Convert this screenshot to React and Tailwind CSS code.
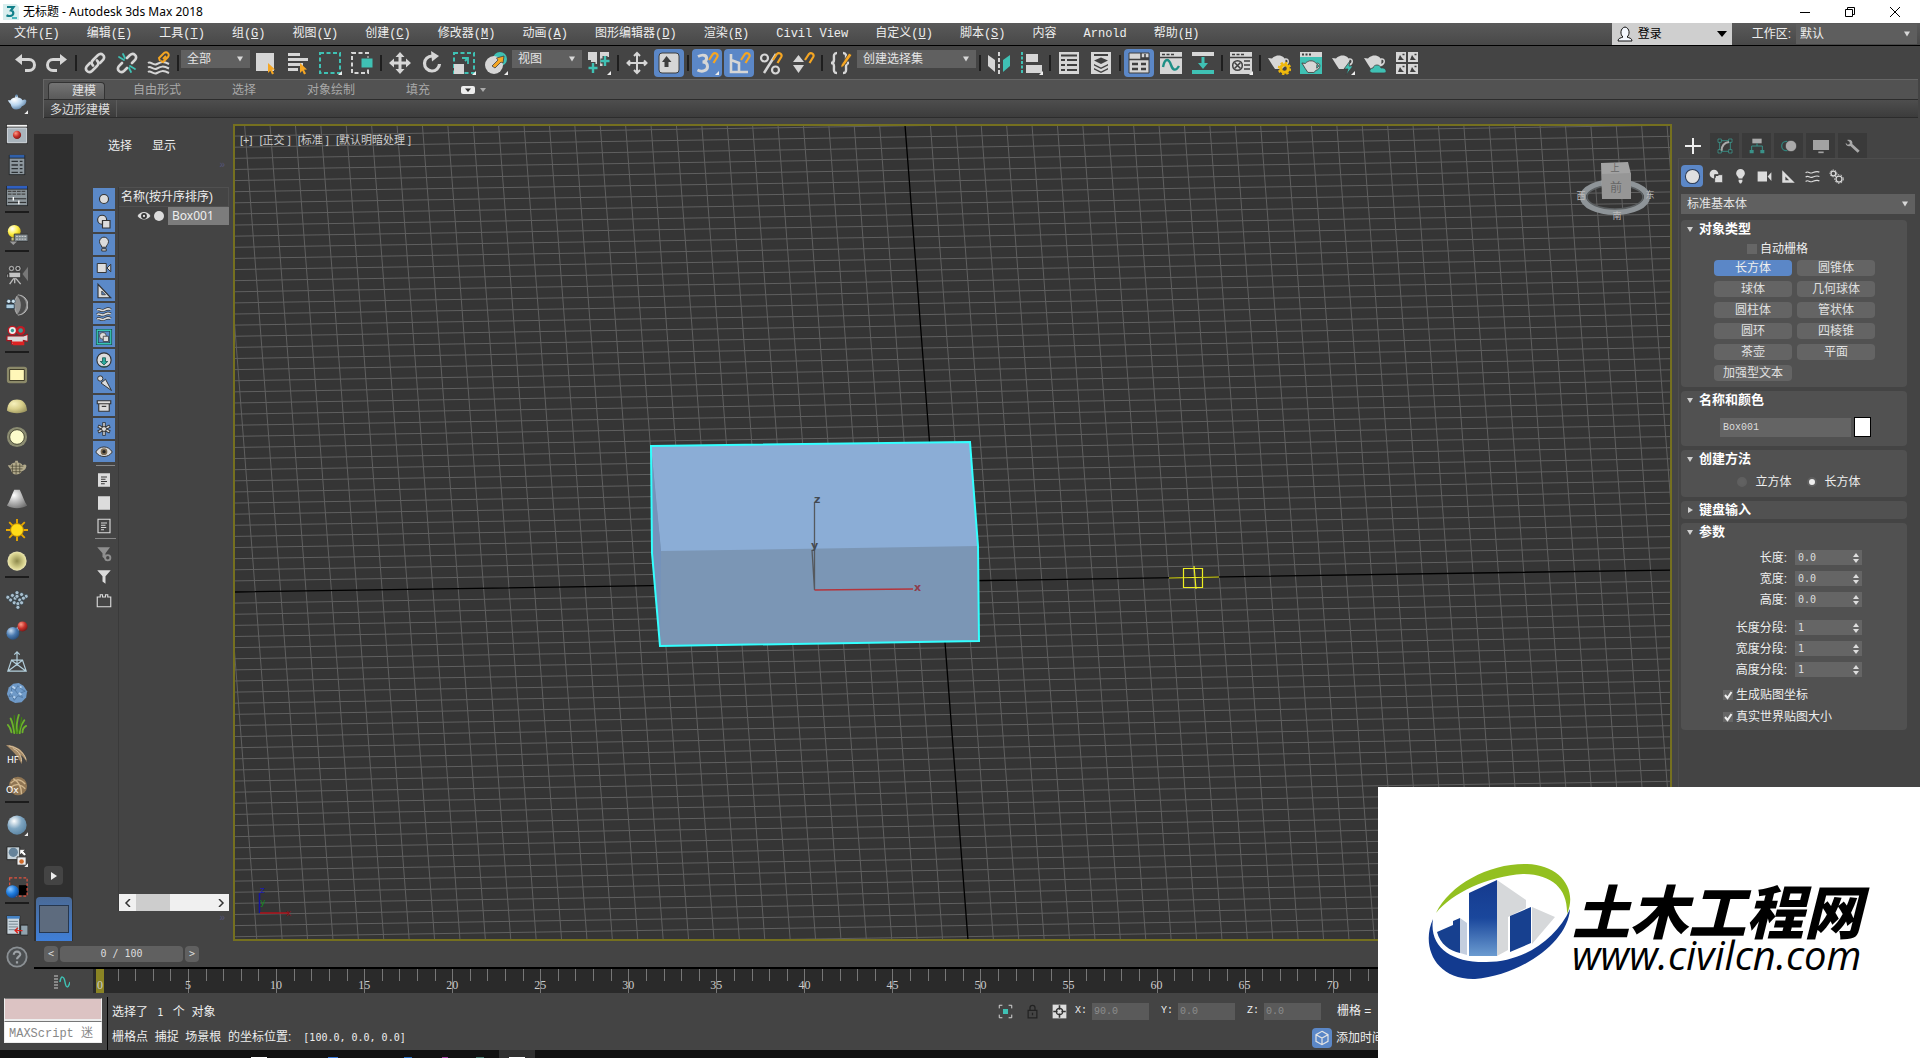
import React from "react";

const W = "#d6d6d6";
const T = "#3fc1b4";
const O = "#f5a623";
const D = "#3f3f3f";

/* ---------- small building blocks ---------- */

function Svg({ children, size = "size-6", box = "0 0 24 24" }) {
  return (
    <svg viewBox={box} className={`${size} shrink-0`} fill="none" aria-hidden="true">
      {children}
    </svg>
  );
}

function Caret({ color = "#d8d8d8" }) {
  return (
    <svg viewBox="0 0 8 6" className="pointer-events-none h-[6px] w-2 shrink-0 self-center justify-self-end [grid-area:1/1] mr-[6px]" aria-hidden="true">
      <path d="M1 .5h6L4 5.5z" fill={color} />
    </svg>
  );
}

function Dropdown({ label, value, className, color }) {
  return (
    <span className={`grid shrink-0 ${className}`}>
      <select aria-label={label} className="h-full w-full appearance-none bg-transparent pl-[6px] pr-4 text-xs outline-none [grid-area:1/1]">
        <option>{value}</option>
      </select>
      <Caret color={color} />
    </span>
  );
}

function Dots({ className }) {
  return <div className={`h-1 bg-[radial-gradient(#a0a0a0_40%,transparent_45%)] bg-size-[2px_2px] ${className}`} />;
}

/* ---------- main toolbar icons ---------- */

const cursor = <path d="M14 12l7 6.5-3 .3 2 3.6-2 1-1.7-3.6L14 22z" fill={O} />;
const corner = <path d="M24 20v4h-4z" fill="#eee" />;
const magnet = <path d="M14 9l4-6a2.6 2.6 0 0 1 4.2 3L18.500 12" stroke={O} strokeWidth="2.200" />;
const pot = (
  <path d="M1 7l4 .5C6.500 5.500 9 5 10 4.500h3c1.500.500 3.500 1 4.500 3 2-1 4.500.2 4.500 2.800 0 3-2.500 4.700-4.500 5.200L15 18H8l-3-4.500L1 7zm17.300 6c1.200-.6 2.200-1.500 2.200-2.800 0-1-.9-1.600-2-1.400z" fill={W} />
);

const mainIcons = {
  undo: <path d="M9 3L2 8.500 9 14v-4h7a3.500 3.500 0 0 1 0 8h-4v3h4a6.500 6.500 0 0 0 0-14H9z" fill={W} />,
  redo: <path d="M15 3l7 5.500-7 5.500v-4H8a3.500 3.500 0 0 0 0 8h4v3H8A6.500 6.500 0 0 1 8 7h7z" fill={W} />,
  link: <g stroke={W} strokeWidth="2.600" strokeLinecap="round"><path d="M10 14.500c-2-2-1.500-4 0-5.500l5-5c3.500-3 8 1 5 5l-3 3" /><path d="M14 9.500c2 2 1.500 4 0 5.500l-5 5c-3.500 3-8-1-5-5l3-3" /></g>,
  unlink: <g strokeWidth="2.600" strokeLinecap="round"><path d="M12 7l3-3c3.500-3 8 1 5 5l-3 3M12 17l-3 3c-3.500 3-8-1-5-5l3-3" stroke={W} /><path d="M4 6l5 3M8 3l2 4M20 18l-5-3M16 21l-2-4" stroke={T} strokeWidth="1.800" /></g>,
  bind: <g><path d="M1 12c3-2 5 3 9 1s6-3 12 0M1 16.500c3-2 5 3 9 1s6-3 12 0M1 21c3-2 5 3 9 1s6-3 12 0" stroke={W} strokeWidth="2" /><path d="M13 10l-1-3 5-5c3-2 6 1 4 4l-5 5-2-1M16 8l3-3" stroke={O} strokeWidth="2" /></g>,
  select: <g><path d="M2 2h18v18H2z" fill={W} />{cursor}</g>,
  byName: <g><path d="M2 2h12v3H2zM2 7h20v3H2zM2 12h15v3H2zM2 17h10v3H2z" fill={W} />{cursor}</g>,
  rect: <g><path d="M2 2h20v20H2z" stroke={T} strokeWidth="2" strokeDasharray="4 2.500" />{corner}</g>,
  window: <g><path d="M2 2h16v20H2z" stroke={W} strokeWidth="2" strokeDasharray="4 2.500" /><path d="M11 7h12v10H11z" fill={T} stroke="#444" /></g>,
  move: <path d="M12 1l4.500 5H13.500v4.500h4.500v-3L23 12l-5 4.500v-3h-4.500V18h3L12 23l-4.500-5h3v-4.500H6v3L1 12l5-4.500v3h4.500V6h-3z" fill={W} />,
  rotate: <g><path d="M19.500 13a7.500 7.500 0 1 1-7.500-8" stroke={W} strokeWidth="3.200" /><path d="M11 0l8 5-7 5.500z" fill={W} /></g>,
  scale: <g><path d="M2 2h20v20H2z" stroke={T} strokeWidth="2" strokeDasharray="4 2.500" /><path d="M2 13h10v10H2z" fill={W} /><path d="M10 7h6v6M16 7l-3 3" stroke={T} strokeWidth="1.800" />{corner}</g>,
  place: <g><circle cx="16" cy="8" r="7" fill={T} /><circle cx="10" cy="14" r="9" fill={W} /><path d="M8 15l6-6-1.500-2L20 5l-1 7-2-1-6 6z" fill={O} stroke={D} strokeWidth=".8" />{corner}</g>,
  pivot: <g><path d="M1 1h9v12H7v7H4V9H1zM13 1h9v5h-3v9h-6z" fill={W} /><path d="M6 11v10M1.500 16h9M18 5v10M13.500 10h9" stroke="#444" strokeWidth="5" /><path d="M6 12v10M1.500 17h9M18 5v10M13.500 10h9" stroke={T} strokeWidth="2.400" />{corner}</g>,
  manip: <path d="M12 3v18M3 12h18M9 5l3-3 3 3M9 19l3 3 3-3M5 9.500L2.500 12 5 14.500M19 9.500l2.500 2.500-2.500 2.500" stroke={W} strokeWidth="2" />,
  keyboard: <g><rect x="2" y="2" width="20" height="20" rx="3" fill={W} stroke={D} /><path d="M9.500 5l5 6h-3v5h-4v-5H5z" fill={D} /></g>,
  snap3: <g><path d="M3 5.500c6-3 9-.5 8.500 2.500-.3 2-2 3-4 3 3 0 5 1.500 5 4.500 0 4-5 6-10 3.500" stroke={W} strokeWidth="3" />{magnet}{corner}</g>,
  angle: <g><path d="M4 3v18h17M4 9l8 3v9" stroke={W} strokeWidth="2.600" />{magnet}</g>,
  percent: <g><circle cx="5.500" cy="7" r="3.500" stroke={W} strokeWidth="2.200" /><circle cx="16.500" cy="19" r="3.500" stroke={W} strokeWidth="2.200" /><path d="M17 3L5 22" stroke={W} strokeWidth="2.500" />{magnet}</g>,
  spinner: <g><path d="M2 11l5.500-7L13 11zM2 14h11l-5.500 8z" fill={W} />{magnet}</g>,
  named: <g><path d="M8 2C4 2 5 6 5 8.500S4 12 2 12c2 0 3 1 3 3.500S4 22 8 22M14 2c4 0 3 4 3 6.500s1 3.500 3 3.500c-2 0-3 1-3 3.500s1 6.500-3 6.500" stroke={W} strokeWidth="2.400" /><path d="M12 14l8-12 3 2-8 11-3 2z" fill={O} stroke={D} strokeWidth=".8" /></g>,
  mirror: <g><path d="M1 4l7 5v12l-7-6z" fill={W} /><path d="M23 4l-7 5v12l7-6z" fill={T} /><path d="M12 1v22" stroke={W} strokeWidth="2" strokeDasharray="4 2" /></g>,
  align: <g><path d="M3 1v22" stroke={T} strokeWidth="2" strokeDasharray="3 1.500" /><path d="M7 3h12v8H7zM7 14h16v8H7z" fill={W} />{corner}</g>,
  table: <g><path d="M2 1h20v22H2z" fill={W} /><path d="M4 4.500h16M4 9h4M10 9h10M4 14h4M10 14h10M4 19h4M10 19h10" stroke={D} strokeWidth="2.200" /></g>,
  layers: <g><path d="M2 1h20v22H2z" fill={W} /><path d="M5 4h14" stroke={D} strokeWidth="2" /><path d="M12 6.500l7 3-7 3.500-7-3.500zM5 13l7 3.500 7-3.500v1.500L12 18l-7-3.500zM5 17l7 3.500 7-3.500v1.500L12 22l-7-3.500z" fill={D} /></g>,
  ribbon: <g><path d="M2 2h20v20H2z" fill={W} stroke={D} /><path d="M14 2v5h8M18 3v4M2 8.500h20" stroke={D} strokeWidth="1.500" /><path d="M5 13h6M14 13h5M5 18h6M14 18h5" stroke={D} strokeWidth="2.400" /></g>,
  curve: <g><path d="M1 1h22v22H1z" fill={W} /><path d="M3 3.500h3M7.500 3.500h3M12 3.500h3M1 6.500h22" stroke={D} strokeWidth="1.600" /><path d="M4 16c2-10 6-8 8-2s5 6 8 1" stroke="#1f8f86" strokeWidth="2.400" /></g>,
  schematic: <g><path d="M1 1h22v4H1z" fill={W} /><path d="M1 19h22v4H1z" fill={T} /><path d="M10.500 6h3v6H17l-5 6-5-6h3.500z" fill={T} /></g>,
  material: <g><path d="M1 1h22v22H1z" fill={W} /><path d="M3 3.500h3M7.500 3.500h3M12 3.500h3M15 10h6M15 14h6M15 18h6M1 6.500h22" stroke={D} strokeWidth="1.600" /><circle cx="8.500" cy="14.500" r="4.800" stroke={D} strokeWidth="1.500" /><path d="M5.500 11.500l6 6M11.500 11.500l-6 6" stroke={D} strokeWidth="1.500" />{corner}</g>,
  setup: <g>{pot}<circle cx="17.500" cy="17.500" r="3.800" stroke="#f0b90b" strokeWidth="3" /><circle cx="17.500" cy="17.500" r="5.800" stroke="#f0b90b" strokeWidth="1.800" strokeDasharray="2.500 2" /></g>,
  frame: <g><path d="M1 1h22v22H1z" fill={T} /><path d="M1 1h22v5H1z" fill={W} /><path d="M3 3.500h2M6.500 3.500h2M10 3.500h2" stroke={D} strokeWidth="2" /><g transform="translate(2 6) scale(.86)" stroke={D}>{pot}</g></g>,
  render: <g>{pot}<path d="M19 10l-6 8h4l-2 6 7-9h-4z" fill={T} stroke={D} strokeWidth=".8" />{corner}</g>,
  cloud: <g>{pot}<path d="M9 22c-4-1-2-5 1-5 1-4 7-4 8 0 5-1 7 5 3 5z" fill={T} stroke={D} strokeWidth=".8" /></g>,
  gallery: <g><path d="M1 1h10v10H1zM13 1h10v10H13zM1 13h10v10H1zM13 13h10v10H13z" fill={W} /><path d="M3 9l2-5 2 3 2 2zM15 9l2-5 2 3 2 2zM3 21l2-5 2 3 2 2zM15 21l2-5 2 3 2 2z" fill={D} /><path d="M7.500 3.500h2M19.500 3.500h2M7.500 15.500h2M19.500 15.500h2" stroke={D} strokeWidth="1.500" /></g>,
};

function ToolButton({ name, active }) {
  return (
    <button aria-label={name} className="flex h-8 w-8 shrink-0 items-center justify-center">
      <span className={active ? "flex h-7 w-[30px] items-center justify-center rounded-sm bg-[#5b87c7]" : "flex h-7 w-[30px] items-center justify-center"}>
        <Svg size="size-6">{mainIcons[name]}</Svg>
      </span>
    </button>
  );
}

const Sep = () => <span className="mx-[2px] h-4 w-[2px] shrink-0 bg-[#1e1e1e]" />;

function Tools({ names, active = [] }) {
  return names.map((n) => <ToolButton key={n} name={n} active={active.includes(n)} />);
}

function MainToolbar() {
  const sel = "h-[18px] bg-[#606060] text-[#e4e4e4]";
  return (
    <div className="flex h-[33px] shrink-0 items-center overflow-hidden bg-[#444]">
      <span className="ml-[3px] mr-[2px] h-7 w-1 bg-[radial-gradient(#a0a0a0_40%,transparent_45%)] bg-size-[2px_2px]" />
      <Tools names={["undo", "redo"]} />
      <Sep />
      <Tools names={["link", "unlink", "bind"]} />
      <Sep />
      <Dropdown label="选择过滤器" value="全部" className={`mb-[7px] w-[69px] ${sel}`} />
      <Tools names={["select", "byName", "rect", "window"]} />
      <Sep />
      <Tools names={["move", "rotate", "scale", "place"]} />
      <Dropdown label="参考坐标系" value="视图" className={`mb-[7px] mr-px w-[70px] ${sel}`} />
      <Tools names={["pivot"]} />
      <Sep />
      <Tools names={["manip", "keyboard"]} active={["keyboard"]} />
      <Sep />
      <Tools names={["snap3", "angle", "percent", "spinner"]} active={["snap3", "angle"]} />
      <Sep />
      <Tools names={["named"]} />
      <Dropdown label="命名选择集" value="创建选择集" className={`mb-[7px] mr-px w-[119px] ${sel}`} />
      <Sep />
      <Tools names={["mirror", "align"]} />
      <Sep />
      <Tools names={["table", "layers"]} />
      <Sep />
      <Tools names={["ribbon", "curve", "schematic"]} active={["ribbon"]} />
      <Sep />
      <Tools names={["material"]} />
      <Sep />
      <Tools names={["setup", "frame", "render", "cloud", "gallery"]} />
    </div>
  );
}

/* ---------- title and menu ---------- */

function TitleBar() {
  return (
    <header className="flex h-[23px] shrink-0 items-center bg-white text-black">
      <Svg size="ml-[3px] size-4" box="0 0 16 16">
        <path d="M0 0h13l3 3v13H0z" fill="#d8eeee" />
        <path d="M4 3h6.500L8 6.500c3 .5 3.500 5-1 5.500-1.500.1-2.500-.2-3.500-.8" stroke="#12808a" strokeWidth="2.200" />
        <path d="M9 14h5" stroke="#1aa3a8" strokeWidth="1.500" />
      </Svg>
      <h1 className="ml-1 text-xs font-normal font-['Noto_Sans','Noto_Sans_CJK_SC',sans-serif]">无标题 - Autodesk 3ds Max 2018</h1>
      <div className="ml-auto flex">
        <button aria-label="最小化" className="flex w-[45px] justify-center"><Svg size="size-3" box="0 0 12 12"><path d="M1 6.500h10" stroke="#000" /></Svg></button>
        <button aria-label="还原" className="flex w-[45px] justify-center"><Svg size="size-3" box="0 0 12 12"><path d="M1.500 3.500h7v7h-7zM3.500 3.500v-2h7v7h-2" stroke="#000" /></Svg></button>
        <button aria-label="关闭" className="mr-[3px] flex w-[45px] justify-center"><Svg size="size-3" box="0 0 12 12"><path d="M1 1l10 10M11 1L1 11" stroke="#000" /></Svg></button>
      </div>
    </header>
  );
}

const menus = [
  ["文件", "F"], ["编辑", "E"], ["工具", "T"], ["组", "G"], ["视图", "V"], ["创建", "C"], ["修改器", "M"], ["动画", "A"],
  ["图形编辑器", "D"], ["渲染", "R"], ["Civil View"], ["自定义", "U"], ["脚本", "S"], ["内容"], ["Arnold"], ["帮助", "H"],
];

function MenuBar() {
  return (
    <nav className="flex h-[23px] shrink-0 items-center border-b border-black bg-linear-to-b from-[#5a5a5a] to-[#484848] text-[#eee]">
      <div className="flex gap-[27px] pl-[14px] font-['Liberation_Mono','Noto_Sans_CJK_SC',monospace] text-xs">
        {menus.map(([name, key]) => (
          <button key={name} className="whitespace-nowrap">
            {name}{key && <>(<u>{key}</u>)</>}
          </button>
        ))}
      </div>
      <div className="ml-auto flex h-[22px] w-[120px] items-center bg-[#cfcfcf] pl-[5px]">
        <Svg size="size-4" box="0 0 16 16">
          <path d="M1 15c0-3 3-3 5-4-3-2-3-9 2-10 5 1 5 8 2 10 2 1 5 1 5 4z" fill="#f4f8ff" stroke="#111" />
        </Svg>
        <span className="grid h-[22px] flex-1 text-black">
          <select aria-label="登录" className="appearance-none bg-transparent pl-[5px] text-xs outline-none [grid-area:1/1]"><option>登录</option></select>
          <svg viewBox="0 0 10 6" className="pointer-events-none mr-[5px] h-[6px] w-[10px] self-center justify-self-end [grid-area:1/1]" aria-hidden="true"><path d="M0 0h10L5 6z" fill="#000" /></svg>
        </span>
      </div>
      <label htmlFor="workspace" className="ml-5 mr-[5px] text-xs">工作区:</label>
      <span className="mr-[3px] grid h-5 w-[121px] bg-[#5e5e5e]">
        <select id="workspace" className="appearance-none bg-transparent pl-1 text-xs outline-none [grid-area:1/1]"><option>默认</option></select>
        <Caret />
      </span>
    </nav>
  );
}

function Ribbon() {
  return (
    <div className="ml-[9px] mr-[2px] shrink-0 border-l border-t border-[#666] text-xs">
      <div className="flex h-5 items-end gap-[51px] border-b border-[#2c2c2c] bg-[#525252] pl-1 text-[#a8a8a8]">
        <button className="-mr-[23px] h-[17px] rounded-t-sm border border-b-0 border-[#333] bg-linear-to-b from-[#747474] to-[#5a5a5a] pl-[23px] pr-2 leading-4 text-[#e0e0e0]">建模</button>
        <button className="leading-[17px]">自由形式</button>
        <button className="leading-[17px]">选择</button>
        <button className="leading-[17px]">对象绘制</button>
        <button className="leading-[17px]">填充</button>
        <button aria-label="功能区选项" className="-ml-5 flex h-[18px] items-center gap-[5px]">
          <Svg size="h-2 w-[14px]" box="0 0 14 8"><rect width="14" height="8" rx="2" fill="#eee" /><path d="M4 2.500h6L7 6z" fill="#333" /></Svg>
          <Svg size="size-[6px]" box="0 0 6 6"><path d="M0 1h6L3 5z" fill="#aaa" /></Svg>
        </button>
      </div>
      <div className="flex h-[18px] border-b border-[#2c2c2c] bg-linear-to-b from-[#4e4e4e] to-[#3c3c3c] text-[#ddd]">
        <button className="border-r border-[#5c5c5c] px-[6px] leading-5">多边形建模</button>
      </div>
    </div>
  );
}

/* ---------- left icon rail ---------- */

const railPot = <path d="M2 9l3 0c1-2 3-3 5-3V4h3v2c2 0 4 1 5 3 3-2 5 0 4 2-1 4-4 4-5 5-1 2-3 3-6 3s-5-2-6-6c-1-1-2-2-3-4z" />;

const rail = {
  teapot: <g><g fill="url(#gBlue)">{railPot}</g><circle cx="11.500" cy="4" r="1.300" fill="#6b93b8" />{corner}</g>,
  renderWin: <g><path d="M0 1h24v22H0z" fill="#333" /><path d="M1 2h22v2H1z" fill="#f4f4f4" /><path d="M1.500 5.500h21v16h-21z" fill="#a9b4bc" stroke="#dde3e8" /><circle cx="12" cy="13" r="4.500" fill="url(#gRed)" /></g>,
  sheet: <g><path d="M3 1h18v22H3z" fill="#25282a" /><path d="M4 1h16v3H4z" fill="#2f5fa8" /><path d="M4 5h16v17H4z" fill="#8d979e" /><path d="M6 8h7M15 8h3M6 12h7M15 12h3M6 16h7M15 16h3M6 20h7M15 20h3" stroke="#2c3134" strokeWidth="1.500" /></g>,
  sliders: <g><path d="M0 1h24v22H0z" fill="#25282a" /><path d="M1 1h22v3H1z" fill="#2f5fc0" /><path d="M1 5h22v17H1z" fill="#8b9499" /><path d="M2 7h20M2 10h20" stroke="#444" strokeDasharray="4 1" strokeWidth="1.500" /><path d="M2 15h20M2 19h20" stroke="#222" /><path d="M8 13v4M14 17v4" stroke="#fff" strokeWidth="1.500" /></g>,
  bulb: <g><circle cx="9" cy="8" r="7" fill="url(#gYellow)" /><path d="M6 15h5v3H6z" fill="#c9c077" /><path d="M9 11h15v8H9z" fill="#7f898e" stroke="#333" /><path d="M11 13.500h12M11 16.500h12" stroke="#ddd" strokeDasharray="2 1" /><path d="M4 19h8l-4 4z" fill="#999" /></g>,
  camera: <g stroke="#222" strokeWidth=".8"><path d="M9 16l-5 7M10 16l6 7M9.500 16v6" stroke="#bbb" strokeWidth="1.500" /><circle cx="6" cy="6" r="3.500" fill="#aaa" /><circle cx="13" cy="6" r="3.500" fill="#aaa" /><circle cx="6" cy="6" r="1.200" fill="#333" /><circle cx="13" cy="6" r="1.200" fill="#333" /><path d="M3 10h13v6H3zM1 12h2v4H1z" fill="#c4c4c4" /><path d="M24 4v16l-6-8z" fill="#777" stroke="none" /></g>,
  dome: <g><path d="M13 1a11 11 0 0 1 0 22c-5-6-5-16 0-22z" fill="#8f8f8f" stroke="#bbb" /><path d="M11 1a11 11 0 0 1 0 22c7-5 7-17 0-22z" fill="#4d4d4d" /><circle cx="3" cy="8" r="2.200" fill="#cfe3ee" stroke="#123" strokeWidth=".6" /><circle cx="8" cy="8" r="2.200" fill="#cfe3ee" stroke="#123" strokeWidth=".6" /><path d="M0 11h9v5H0z" fill="#a9c9dc" stroke="#123" strokeWidth=".8" /></g>,
  redCam: <g><circle cx="7" cy="6" r="4.500" fill="#ececec" stroke="#c21a24" strokeWidth="1.500" /><circle cx="16" cy="6" r="5" fill="#c21a24" /><circle cx="16" cy="6" r="2.500" fill="#3a9a92" /><circle cx="7" cy="6" r="1.800" fill="#3a9a92" /><path d="M1 12h18l5-2v8l-5-1v4H6v-4H1z" fill="#d8d8d8" stroke="#a3141e" strokeWidth="1.300" /><path d="M6 18h14v4H8z" fill="#d22" /></g>,
  area: <g><rect x="1" y="3" width="22" height="18" rx="3" fill="#8b8969" /><path d="M4 6h16v12H4z" fill="#fff7b8" stroke="#333020" /></g>,
  half: <g><path d="M1 17C2 8 6 5 12 5s10 3 11 12c-5 4-17 4-22 0z" fill="url(#gCream)" /></g>,
  ball: <g><circle cx="12" cy="12" r="11" fill="#8b8c72" /><circle cx="12" cy="12" r="8" fill="#fcfccb" stroke="#40402c" /></g>,
  wirePot: <g><g fill="#b3ab8c">{railPot}</g><path d="M7 8v10M11 6v13M15 7v11M5 10h14M5 13h13M7 16h10" stroke="#4c4736" strokeWidth=".8" /></g>,
  cone: <path d="M9 2h6c3 6 5 13 8 17-6 4-16 4-22 0C4 15 6 8 9 2z" fill="url(#gCone)" />,
  sun: <g><path d="M12 0v24M0 12h24M3.500 3.500l17 17M20.500 3.500l-17 17" stroke="#e9a800" strokeWidth="2" /><circle cx="12" cy="12" r="7" fill="#ffdb18" stroke="#b98500" /></g>,
  disc: <circle cx="12" cy="12" r="10.500" fill="url(#gDisc)" />,
  particles: <g fill="#a9bfce" stroke="#2b3940" strokeWidth=".7">{[[2, 9], [7, 7], [12, 4], [17, 6], [22, 8], [5, 12], [10, 10], [15, 12], [19, 10], [9, 15], [13, 16], [17, 15], [13, 20], [12, 8]].map(([x, y]) => <circle key={`${x}-${y}`} cx={x} cy={y} r="2.200" />)}</g>,
  spheres: <g><path d="M8 13l9-6" stroke="#9fb3c6" strokeWidth="4" /><circle cx="18" cy="7" r="5.500" fill="url(#gRed)" /><circle cx="7.500" cy="14.500" r="7" fill="url(#gSteel)" /></g>,
  lattice: <g stroke="#b3cfdc" strokeWidth="1.300"><path d="M6 10h12l4 12H2zM6 10l16 12M18 10L2 22M12 16V1M9 4l3-3 3 3" /></g>,
  rock: <g><path d="M8 2l6-1 5 3 4 6-1 7-5 5-7 1-6-3-3-7 2-7z" fill="#6f9ac8" /><path d="M6 6l4 3 3-5 4 4 4 2-5 2 2 5-5-2-4 5-2-5-4 1 3-5zM10 9l3 4" stroke="#4a7099" strokeWidth=".8" /><path d="M7 5l3 2M14 12l3 2M8 16l2 1M15 5l2 1M5 11l2 1" stroke="#b8d3ee" strokeWidth="2" /></g>,
  grass: <g strokeWidth="2" strokeLinecap="round"><path d="M12 22C11 14 12 8 14 2M9 22C8 14 7 10 5 6M15 22c0-8 3-11 5-14M6 21c-1-4-2-6-4-8M18 21c0-4 2-6 4-7" stroke="#6cb22c" /><path d="M11 22C9 12 9 8 9 3M13 22c2-6 4-12 4-17" stroke="#3c7d14" strokeWidth="1.500" /></g>,
  hair: <g><path d="M0 1c9 0 20 4 23 19-3-5-6-8-8-8 2 3 3 6 2 10C13 12 6 7 0 1z" fill="#a58a67" /><path d="M3 2c9 2 16 6 19 15M8 5c6 3 9 8 9 14" stroke="#e0c9a5" /><text x="1" y="21" fontSize="10" fill="#fff" fontFamily="DejaVu Sans">HF</text></g>,
  ox: <g><circle cx="13" cy="12" r="10" fill="#8f7553" /><path d="M5 9c6-6 12-4 16 1M5 14c6-6 12-3 16 1M8 4c5 3 9 9 9 17" stroke="#d1b78e" strokeWidth="1.500" /><text x="0" y="20" fontSize="10" fill="#fff" fontFamily="DejaVu Sans">Ox</text></g>,
  glass: <g><circle cx="12" cy="12" r="10.500" fill="url(#gGlass)" />{corner}</g>,
  matSwap: <g><path d="M1 2h14v14H1z" fill="#c7d3da" stroke="#222" /><circle cx="8" cy="8" r="5" fill="#66839a" /><path d="M12 13h10v9H12z" fill="#eee" stroke="#333" /><circle cx="17" cy="18" r="2.500" fill="#cf6b2b" /><path d="M15 5h6l-2 2 3 3-2 2-3-3-2 2z" fill="#fff" stroke="#222" strokeWidth=".6" />{corner}</g>,
  region: <g><path d="M14 10h9v11h-9z" fill="#000" /><path d="M4 2h19v20H4z" stroke="#e2523e" strokeWidth="1.300" strokeDasharray="3 2" /><circle cx="7" cy="17" r="7" fill="url(#gSphere)" /></g>,
  doc: <g><path d="M1 1h14v20H1z" fill="#c9d5dd" stroke="#222" /><path d="M1 1h14v3H1z" fill="#4582c4" /><path d="M3 7h10M3 10h10M3 13h10M3 16h10" stroke="#71828d" /><path d="M16 11h8v11h-8z" fill="#91a3ae" stroke="#222" /><path d="M18 17h-7M13 14l-3 3 3 3" stroke="#d9231c" strokeWidth="1.500" /></g>,
  help: <g><circle cx="12" cy="12" r="10.500" fill="#4c4f51" stroke="#8b9094" strokeWidth="2" /><path d="M8.500 9.500c0-5 7.500-4 7 0-.3 2-3.500 2.500-3.500 5M12 16.500v2.500" stroke="#9da2a6" strokeWidth="2.400" /></g>,
};

const railGroups = [
  ["teapot", "renderWin", "sheet", "sliders"],
  ["bulb"],
  ["camera", "dome", "redCam"],
  ["area", "half", "ball", "wirePot", "cone", "sun", "disc"],
  ["particles", "spheres", "lattice", "rock", "grass", "hair", "ox"],
  ["glass", "matSwap", "region"],
  ["doc", "help"],
];

function Radial({ id, stops }) {
  return (
    <radialGradient id={id} cx=".35" cy=".3" r=".8">
      {stops.map((c, i) => <stop key={c} offset={i / (stops.length - 1)} stopColor={c} />)}
    </radialGradient>
  );
}

function Gradients() {
  return (
    <svg className="absolute size-0" aria-hidden="true">
      <defs>
        <Radial id="gBlue" stops={["#ffffff", "#b7d4ee", "#53779b"]} />
        <Radial id="gRed" stops={["#ff9a86", "#c8322c", "#6b1212"]} />
        <Radial id="gYellow" stops={["#ffffff", "#fff04a", "#c7a400"]} />
        <Radial id="gCream" stops={["#f6f1bd", "#d8cf8b", "#96905c"]} />
        <Radial id="gCone" stops={["#ffffff", "#b5b5b5", "#6f6f6f"]} />
        <Radial id="gSteel" stops={["#c9ddf0", "#4a7ab0", "#21456f"]} />
        <Radial id="gGlass" stops={["#ffffff", "#7ea5c1", "#56809f"]} />
        <Radial id="gSphere" stops={["#8cc6ff", "#1f7cdc", "#0c3f8c"]} />
        <radialGradient id="gDisc"><stop stopColor="#8e8a4c" /><stop offset=".75" stopColor="#d9d490" /><stop offset="1" stopColor="#ece7b4" /></radialGradient>
      </defs>
    </svg>
  );
}

function IconRail() {
  return (
    <aside className="flex w-[34px] shrink-0 flex-col pt-1">
      <Dots className="mx-[3px] w-6" />
      {railGroups.map((group, i) => (
        <React.Fragment key={group[0]}>
          {i > 0 && <span className="mx-[5px] h-2 shrink-0 border-t-2 border-[#1c1c1c]" />}
          {group.map((n) => (
            <button key={n} aria-label={n} className="flex h-[31px] shrink-0 items-center justify-center">
              <Svg size="size-[22px]">{rail[n]}</Svg>
            </button>
          ))}
        </React.Fragment>
      ))}
    </aside>
  );
}

/* ---------- scene explorer ---------- */

const L = "#dcdcdc";
const K = "#333";
const explorer = {
  geometry: <circle cx="12" cy="12" r="6" fill={L} stroke={K} strokeWidth="1.500" />,
  shapes: <g stroke={K} strokeWidth="1.500"><circle cx="9.500" cy="9" r="6" fill={L} /><path d="M10 10h10v10H10z" fill={L} /><path d="M10 15v-5h5" stroke={K} /></g>,
  lights: <g stroke={K} strokeWidth="1.300"><path d="M9 15c0-3-3-4-3-7.500a6 6 0 0 1 12 0C18 11 15 12 15 15z" fill={L} /><path d="M9 17h6v3H9z" fill={L} /></g>,
  cameras: <g stroke={K} strokeWidth="1.300"><path d="M3 6h12v12H3z" fill={L} /><path d="M16 12l5-5v10z" fill={L} /></g>,
  helpers: <g><path d="M4 3v18h17z" fill={L} stroke={K} strokeWidth="1.500" /><path d="M9 12v5h5z" fill="#5b87c7" stroke={K} /></g>,
  warps: <g strokeWidth="2"><path d="M3 7c3-3 5 2 9 0s6-3 9-1M3 13c3-3 5 2 9 0s6-3 9-1M3 19c3-3 5 2 9 0s6-3 9-1" stroke={K} strokeWidth="4" /><path d="M3 7c3-3 5 2 9 0s6-3 9-1M3 13c3-3 5 2 9 0s6-3 9-1M3 19c3-3 5 2 9 0s6-3 9-1" stroke={L} strokeWidth="2" /></g>,
  groups: <g><path d="M3 3h18v18H3z" stroke="#123f3c" strokeWidth="3.500" /><path d="M3 3h18v18H3z" stroke="#39c4b2" strokeWidth="1.800" /><circle cx="10.500" cy="10.500" r="4.500" fill={L} stroke={K} /><path d="M11 11h7v7h-7z" fill={L} stroke={K} /></g>,
  xrefs: <g><circle cx="12" cy="12" r="9.500" fill={L} stroke={K} strokeWidth="1.500" /><path d="M10 9h4v5h3l-5 4.500L7 14h3zM7 20.500h10" fill="#2cab9c" stroke="#14524b" /></g>,
  bones: <g fill={L} stroke={K} strokeWidth="1.300"><circle cx="7" cy="6" r="3.500" /><path d="M8 12l6-5 8 15z" /></g>,
  containers: <g fill={L} stroke={K} strokeWidth="1.500"><path d="M5 9h14v10H5zM3 5h18v4H3z" /><path d="M9 12.500h6" /></g>,
  frozen: <g><path d="M12 3v18M4 8l16 8M20 8L4 16" stroke={K} strokeWidth="4.500" /><path d="M12 4v16M5 8.500l14 7M19 8.500l-14 7" stroke={L} strokeWidth="2" /><circle cx="12" cy="12" r="3.500" stroke={K} /></g>,
  hidden: <g><path d="M1 12c5-9 17-9 22 0-5 8-17 8-22 0z" fill={L} stroke={K} strokeWidth="1.300" /><circle cx="12" cy="11.500" r="4.500" fill="#7a6a52" /><circle cx="12" cy="11.500" r="2.200" fill="#222" /></g>,
};
const explorerPlain = {
  all: <g><path d="M4 3h16v18H4z" fill={L} /><path d="M8 8h8M8 11h6M8 14h8M8 17h5" stroke={K} strokeWidth="1.300" /></g>,
  none: <path d="M4 3h16v18H4z" fill={L} />,
  invert: <g><path d="M4 3h16v18H4z" stroke={L} strokeWidth="1.500" /><path d="M8 8h8M8 11h6M8 14h7M8 17h4" stroke={L} strokeWidth="1.300" /></g>,
};
const explorerFilter = {
  filterSettings: <g><path d="M3 3h17l-6 8v8l-4-3v-5z" fill="#8f8f8f" /><circle cx="17" cy="17" r="3.500" stroke="#8f8f8f" strokeWidth="2.500" fill="#444" /></g>,
  filter: <path d="M3 3h18l-7 8v10l-4-3v-7z" fill={L} />,
  sets: <path d="M3 8h4V5h3v3h4V5h3v3h4v13H3z" stroke={L} strokeWidth="1.500" />,
};

function ExplorerIcons({ set, active }) {
  return Object.entries(set).map(([n, art]) => (
    <button key={n} aria-label={n} className="flex h-[23px] w-[22px] items-center">
      <span className={active ? "flex h-[21px] w-[22px] items-center justify-center bg-[#5b89c8]" : "flex h-[21px] w-[22px] items-center justify-center"}>
        <Svg size="size-[18px]">{art}</Svg>
      </span>
    </button>
  ));
}

function SceneExplorer() {
  return (
    <aside className="flex w-[160px] shrink-0 flex-col pr-1 text-xs text-[#eee]">
      <Dots className="ml-[22px] mt-2 w-[131px]" />
      <div className="flex gap-5 pl-[35px] pt-[7px] leading-[18px]">
        <button>选择</button>
        <button>显示</button>
      </div>
      <span className="self-end pr-1 text-[10px] leading-5 text-[#55557a]">»</span>
      <div className="mt-3 flex min-h-0 flex-1">
        <div className="flex w-[45px] shrink-0 flex-col pl-5">
          <ExplorerIcons set={explorer} active />
          <span className="mx-[3px] mb-[2px] mt-[2px] border-t border-[#888]" />
          <ExplorerIcons set={explorerPlain} />
          <span className="mx-[2px] mb-[3px] mt-px border-t border-[#888]" />
          <ExplorerIcons set={explorerFilter} />
        </div>
        <div className="flex min-w-0 flex-1 flex-col border-l border-[#3a3a3a]">
          <div className="h-5 whitespace-nowrap border border-l-0 border-[#505050] pl-[2px] leading-[18px]">名称(按升序排序)</div>
          <div className="flex h-[18px] items-center">
            <Svg size="ml-[18px] size-[14px]"><path d="M1 12c5-9 17-9 22 0-5 8-17 8-22 0z" fill={L} /><circle cx="12" cy="12" r="5" fill="#333" /><circle cx="12" cy="12" r="2" fill={L} /></Svg>
            <span className="ml-[3px] size-[10px] rounded-full bg-[#ddd]" />
            <span className="ml-1 flex-1 bg-[#7c7c7c] pl-1 font-['Noto_Sans',sans-serif] leading-[18px]">Box001</span>
          </div>
          <div className="mt-auto flex h-[17px] items-stretch bg-[#f0f0f0]">
            <button aria-label="向左滚动" className="flex w-[17px] items-center justify-center"><Svg size="size-2" box="0 0 8 8"><path d="M6 0L2 4l4 4" stroke="#333" strokeWidth="1.500" /></Svg></button>
            <span className="w-[34px] bg-[#cdcdcd]" />
            <button aria-label="向右滚动" className="ml-auto flex w-[17px] items-center justify-center"><Svg size="size-2" box="0 0 8 8"><path d="M2 0l4 4-4 4" stroke="#333" strokeWidth="1.500" /></Svg></button>
          </div>
        </div>
      </div>
      <span className="self-end pr-1 text-[10px] leading-[14px] text-[#55557a]">»</span>
      <span className="h-4" />
    </aside>
  );
}

/* ---------- viewport ---------- */

function Viewport() {
  const rows = [];
  for (let i = -42; i <= 34; i++) if (i !== 0) rows.push(592 + i * 11.12);
  const cols = [];
  for (let i = -31; i <= 32; i++) if (i !== 0) cols.push(905 + i * 25.4);
  return (
    <main className="relative mt-[6px] min-w-0 flex-1 overflow-hidden border-2 border-[#75701f] bg-[#353535]">
      <svg viewBox="235 126 1435 813" preserveAspectRatio="xMidYMid slice" className="absolute inset-0 h-full w-full" role="img" aria-label="Box001">
        <g stroke="#606060" strokeWidth="1">
          {rows.map((y) => <path key={y} d={`M235 ${y}L1672 ${y - 22}`} />)}
          {cols.map((x) => <path key={x} d={`M${x} 125L${x + 63} 940`} />)}
        </g>
        <g stroke="#000" strokeWidth="1.300">
          <path d="M235 592L1672 570M905 125L968 940" />
        </g>
        <path d="M651 446L970 442 978 546 979 641 660 646 652 553z" fill="#7b96b5" />
        <path d="M651 446L970 442 978 546 661 551z" fill="#8badd6" />
        <path d="M651 446L661 551 660 646 653 553z" fill="#7492bb" />
        <path d="M651 446L970 442 978 546 979 641 660 646 652 553z" fill="none" stroke="#3ff" strokeWidth="2" />
        <path d="M814.500 590V502M812 550L814.500 590" stroke="#55595e" strokeWidth="1.300" />
        <path d="M814.500 590L913 589" stroke="#b5343b" strokeWidth="1.500" />
        <g fontFamily="DejaVu Sans" fontWeight="bold" fontSize="11">
          <text x="814" y="503" fill="#444a52">z</text>
          <text x="811" y="549" fill="#444a52">y</text>
          <text x="914" y="591" fill="#8e3d4c">x</text>
        </g>
        <path d="M1169 578L1219 577M1194 566L1196 589M1183.500 568.500h19v19h-19z" fill="none" stroke="#ee2" strokeWidth="1.200" />
        <g>
          <path d="M259.500 913V893" stroke="#1414a0" strokeWidth="1.500" />
          <path d="M260 913H289" stroke="#b0101a" strokeWidth="1.500" />
          <g fontFamily="DejaVu Sans" fontSize="9">
            <text x="260" y="893" fill="#1c1cb0">z</text>
            <text x="260" y="905" fill="#138a20">y</text>
            <text x="286" y="916" fill="#8a1018">x</text>
          </g>
        </g>
        <g>
          <ellipse cx="1615" cy="197" rx="32" ry="15" fill="none" stroke="#8e9498" strokeWidth="6" />
          <ellipse cx="1615" cy="197" rx="28" ry="12" fill="none" stroke="#5b5f61" strokeWidth="1.500" />
          <path d="M1601 163l27-1 3 12v25h-29z" fill="#a3a3a3" />
          <path d="M1602 174l29-1v26h-29z" fill="#969696" />
          <g fontFamily="Noto Sans CJK SC" fill="#666" fontSize="12" textAnchor="middle">
            <text x="1616" y="192">前</text>
            <text x="1615" y="171" fontSize="9">上</text>
            <g fill="#bbb" fontSize="9"><text x="1617" y="219">南</text><text x="1581" y="199">西</text><text x="1650" y="198">东</text></g>
          </g>
        </g>
      </svg>
      <div className="relative flex gap-[7px] pl-[5px] pt-[5px] text-[11px] leading-[18px] text-[#ccc]">
        <button>[+]</button>
        <button>[正交 ]</button>
        <button>[标准 ]</button>
        <button>[默认明暗处理 ]</button>
      </div>
    </main>
  );
}

/* ---------- command panel ---------- */

const tabs = {
  创建: <path d="M12 0v24M0 12h24" stroke="#eee" strokeWidth="3" />,
  修改: <g><path d="M4 4h16v16H4z" stroke="#3a9188" strokeWidth="1.300" /><path d="M1.500 1.500h5v5h-5zM17.500 1.500h5v5h-5zM1.500 17.500h5v5h-5zM17.500 17.500h5v5h-5z" fill="#333" stroke="#3fa79c" /><path d="M7 19c0-8 4-12 11-13" stroke="#aaa" strokeWidth="3" /></g>,
  层次: <g><path d="M5 1h14v7H5z" fill="#aaa" /><path d="M12 8v4M4 18v-6h16v6" stroke="#3a9188" strokeWidth="1.500" /><path d="M1 18h6v5H1zM17 18h6v5h-6z" fill="#3a9188" /></g>,
  运动: <g><circle cx="8" cy="12" r="7" stroke="#2f8079" strokeWidth="2" /><circle cx="15" cy="12" r="8.500" fill="#aaa" stroke="#333" /></g>,
  显示: <g><path d="M0 3h24v15H0z" fill="#a2a2a2" /><path d="M8 21.500h8" stroke="#a2a2a2" strokeWidth="2.500" /></g>,
  实用程序: <path d="M3 3l4 3v3l-3 1-3-3c0 4 3 6 7 5l11 10 3-3L11 9c1-4-2-8-8-6z" fill="#a8a8a8" />,
};

const categories = {
  几何体: <circle cx="12" cy="12" r="10" fill="#e0e0e0" stroke="#2d3c55" strokeWidth="1.500" />,
  图形: <g><circle cx="8" cy="8" r="7" fill={L} /><path d="M9 9h13v13H9z" fill={L} stroke="#444" strokeWidth="1.500" /><path d="M10 14v-4h5" stroke="#444" strokeWidth="2" /></g>,
  灯光: <path d="M9 15c0-3-4-4-4-8a7 7 0 0 1 14 0c0 4-4 5-4 8zM9 17h6v3l-2 3h-2l-2-3z" fill={L} />,
  摄影机: <path d="M1 4h15v16H1zM17 12l6-7v14z" fill={L} />,
  辅助对象: <g><path d="M2 2v20h20z" fill={L} /><path d="M7 12v6h6z" fill="#444" /></g>,
  空间扭曲: <path d="M1 6c4-4 6 2 11 0s7-3 11-1M1 13c4-4 6 2 11 0s7-3 11-1M1 20c4-4 6 2 11 0s7-3 11-1" stroke={L} strokeWidth="1.800" />,
  系统: <g stroke={L}><circle cx="7" cy="7" r="3.800" strokeWidth="2" /><circle cx="7" cy="7" r="5.500" strokeDasharray="2 2" strokeWidth="1.500" /><circle cx="16" cy="16" r="4.800" strokeWidth="2" /><circle cx="16" cy="16" r="7" strokeDasharray="2.500 2.500" strokeWidth="1.500" /></g>,
};

function Rollout({ title, open = true, children }) {
  return (
    <section className="mr-2 rounded-sm bg-[#515151]">
      <button className="flex h-[18px] w-full items-center pl-[6px] pr-2">
        <Svg size="size-[6px]" box="0 0 6 6"><path d={open ? "M0 1h6L3 6z" : "M1 0l5 3-5 3z"} fill="#d0d0d0" /></Svg>
        <span className="ml-[6px] text-[13px] font-bold leading-4 text-white">{title}</span>
        <span className="ml-auto h-[6px] w-[6px] bg-[radial-gradient(#999_40%,transparent_45%)] bg-size-[2px_2px]" />
      </button>
      {children}
    </section>
  );
}

function Check({ label, checked }) {
  return (
    <label className="flex items-center gap-[3px]">
      <span className="grid">
        <input type="checkbox" defaultChecked={checked} className="peer size-[10px] appearance-none bg-[#666] [grid-area:1/1]" />
        <svg viewBox="0 0 10 10" className="pointer-events-none invisible size-[10px] [grid-area:1/1] peer-checked:visible" fill="none" aria-hidden="true"><path d="M2 5l2.500 3L8.500 2" stroke="#eee" strokeWidth="2" /></svg>
      </span>
      {label}
    </label>
  );
}

function Radio({ label, checked }) {
  return (
    <label className="flex items-center gap-2">
      <input type="radio" name="method" defaultChecked={checked} className="size-[10px] appearance-none rounded-full border-2 border-[#5f5f5f] bg-[#616161] checked:bg-[#eee]" />
      {label}
    </label>
  );
}

function Spin({ label, value }) {
  return (
    <label className="flex h-[21px] items-center justify-end">
      {label}:
      <span className="ml-2 flex h-[15px] w-[67px] items-center bg-[#656565] pr-[3px]">
        <input defaultValue={value} className="w-0 flex-1 bg-transparent pl-[3px] font-['DejaVu_Sans_Mono',monospace] text-[10px] text-[#ddd] outline-none" />
        <Svg size="h-[10px] w-[6px]" box="0 0 6 10"><path d="M0 4h6L3 0zM0 6h6l-3 4z" fill="#ddd" /></Svg>
      </span>
    </label>
  );
}

const primitives = ["长方体", "圆锥体", "球体", "几何球体", "圆柱体", "管状体", "圆环", "四棱锥", "茶壶", "平面", "加强型文本"];

function CommandPanel() {
  return (
    <aside className="flex w-[248px] shrink-0 flex-col pl-[6px] text-xs text-[#eee]">
      <Dots className="mr-1 mt-2" />
      <div className="mt-[3px] flex gap-[3px]">
        {Object.entries(tabs).map(([n, art], i) => (
          <button key={n} aria-label={n} className={i === 0 ? "flex h-[25px] w-[29px] items-center justify-center" : "flex h-[25px] w-[29px] items-center justify-center bg-[#3a3a3a]"}>
            <Svg size="size-4">{art}</Svg>
          </button>
        ))}
      </div>
      <div className="flex min-h-0 flex-1 flex-col border-l border-t border-[#4d4d4d] pl-[2px] pr-[5px] pt-[6px]">
        <div className="flex gap-[2px]">
          {Object.entries(categories).map(([n, art], i) => (
            <button key={n} aria-label={n} className={i === 0 ? "flex size-[22px] items-center justify-center rounded-sm bg-[#5b87c7]" : "flex size-[22px] items-center justify-center"}>
              <Svg size={i === 0 ? "size-[17px]" : "size-[15px]"}>{art}</Svg>
            </button>
          ))}
        </div>
        <Dropdown label="类别" value="标准基本体" className="mb-[6px] mt-[7px] h-5 bg-[#606060] text-[#e4e4e4]" />
        <div className="flex flex-col gap-1">
          <Rollout title="对象类型">
            <div className="pb-px pl-[66px] pt-[2px] leading-[18px]"><Check label="自动栅格" /></div>
            <div className="grid grid-cols-2 gap-x-[5px] gap-y-[5px] pb-[6px] pl-[33px] pr-8 pt-px">
              {primitives.map((p, i) => (
                <button key={p} className={i === 0 ? "h-4 rounded-sm bg-[#5b87c7] leading-4" : "h-4 rounded-sm bg-[#646464] leading-4 text-[#e0e0e0]"}>{p}</button>
              ))}
            </div>
          </Rollout>
          <Rollout title="名称和颜色">
            <div className="flex items-center gap-[3px] pb-[9px] pl-[39px] pt-2">
              <input aria-label="名称" defaultValue="Box001" className="h-[19px] w-[131px] bg-[#646464] pl-[3px] font-['Liberation_Mono',monospace] text-[10px] text-[#ddd] outline-none" />
              <button aria-label="颜色" className="h-5 w-[17px] border border-black bg-white" />
            </div>
          </Rollout>
          <Rollout title="创建方法">
            <div className="flex justify-center gap-[15px] pb-[6px] pl-[10px] pt-[5px] leading-[18px]">
              <Radio label="立方体" />
              <Radio label="长方体" checked />
            </div>
          </Rollout>
          <Rollout title="键盘输入" open={false} />
          <Rollout title="参数">
            <div className="pr-[45px] pt-[6px]">
              <Spin label="长度" value="0.0" />
              <Spin label="宽度" value="0.0" />
              <Spin label="高度" value="0.0" />
              <div className="h-[7px]" />
              <Spin label="长度分段" value="1" />
              <Spin label="宽度分段" value="1" />
              <Spin label="高度分段" value="1" />
            </div>
            <div className="flex flex-col gap-1 pb-1 pl-[42px] pt-[6px] leading-[18px]">
              <Check label="生成贴图坐标" checked />
              <Check label="真实世界贴图大小" checked />
            </div>
          </Rollout>
        </div>
      </div>
    </aside>
  );
}

/* ---------- timeline and status ---------- */

function TimeSlider() {
  const b = "h-4 rounded-sm bg-[#606060] text-center font-['DejaVu_Sans_Mono',monospace] text-[10px] leading-4 text-[#ddd]";
  return (
    <div className="flex h-[26px] shrink-0 gap-[2px] pl-[10px] pt-[5px]">
      <button aria-label="上一帧" className={`w-[14px] ${b}`}>&lt;</button>
      <button className={`w-[123px] ${b}`}>0 / 100</button>
      <button aria-label="下一帧" className={`w-[14px] ${b}`}>&gt;</button>
    </div>
  );
}

const lastLabel = 70;

function TrackBar() {
  return (
    <div className="flex h-[27px] shrink-0 border-t-2 border-black">
      <button aria-label="曲线编辑器" className="flex w-[59px] shrink-0 items-center justify-center">
        <Svg size="mr-1 h-4 w-4" box="0 0 16 16"><path d="M0 2h4M0 5h4M0 8h4M0 11h4M0 14h4" stroke="#ccc" /><path d="M6 8c1-7 4-6 5 0s3 7 5 0" stroke={T} strokeWidth="1.500" /></Svg>
      </button>
      <div className="flex h-6 flex-1 bg-[#2a2a2a] pl-[7px] pr-[59px]">
        {Array.from({ length: 20 }, (_, g) => (
          <div key={g} className="relative flex flex-1">
            {g === 0 && <span className="absolute -left-1 h-6 w-2 bg-[#8a8424]" />}
            {[0, 1, 2, 3, 4].map((t) => (
              <span key={t} className={t === 0 ? "h-6 flex-1 border-l border-[#777]" : "h-3 flex-1 border-l border-[#777]"} />
            ))}
            {g * 5 <= lastLabel && (
              <span className="absolute -left-3 top-[10px] w-6 text-center font-['Liberation_Serif',serif] text-xs leading-3 text-[#ccc]">{g * 5}</span>
            )}
          </div>
        ))}
      </div>
    </div>
  );
}

function Coord({ axis, value }) {
  return (
    <label className="flex items-center gap-[5px] font-['Liberation_Mono',monospace] text-[10px]">
      {axis}:
      <input defaultValue={value} className="h-[17px] w-[57px] bg-[#5a5a5a] pl-[2px] text-[#8c8c8c] outline-none" />
    </label>
  );
}

function StatusBar() {
  return (
    <footer className="flex h-[56px] shrink-0 text-xs text-[#eee]">
      <div className="ml-1 mt-1 flex w-[98px] shrink-0 flex-col">
        <input aria-label="脚本输出" readOnly className="h-[23px] border border-b-2 border-[#eee] border-t-[#777] bg-[#dcc3c3] outline-none" />
        <input aria-label="MAXScript" defaultValue="MAXScript 迷" className="h-[22px] border border-t-[#777] border-[#eee] bg-white pl-1 font-['Liberation_Mono','Noto_Sans_CJK_SC',monospace] text-xs text-[#888] outline-none" />
      </div>
      <div className="ml-[5px] mt-[3px] flex-1 border-l border-black pl-1">
        <p className="h-[26px] whitespace-pre leading-[30px]">选择了 <span className="font-['DejaVu_Sans_Mono',monospace] text-[10px]"> 1 </span> 个  对象</p>
        <p className="h-[26px] whitespace-pre leading-[28px]">栅格点  捕捉  场景根  的坐标位置:<span className="ml-3 font-['DejaVu_Sans_Mono',monospace] text-[10px]">[100.0, 0.0, 0.0]</span></p>
      </div>
      <div className="mr-[536px] flex flex-col items-end">
        <div className="flex h-[34px] items-center gap-3">
          <Svg size="size-[15px]"><path d="M2 7V2h5M17 2h5v5M22 17v5h-5M7 22H2v-5" stroke="#ddd" strokeWidth="1.500" /><path d="M8 8h8v8H8z" fill={T} /></Svg>
          <Svg size="size-[15px]"><path d="M5 10h14v12H5zM8 10V6a4 4 0 0 1 8 0v4M12 14v4" stroke="#222" strokeWidth="2" /></Svg>
          <Svg size="-mr-[4px] size-[15px]"><path d="M1 1h22v22H1z" fill="#ddd" /><circle cx="12" cy="12" r="5" stroke="#333" strokeWidth="2" /><path d="M12 2v7M12 15v7M2 12h7M15 12h7" stroke="#333" strokeWidth="2.500" /></Svg>
          <Coord axis="X" value="90.0" />
          <Coord axis="Y" value="0.0" />
          <Coord axis="Z" value="0.0" />
          <span className="ml-1 w-[47px] whitespace-nowrap">栅格 =</span>
        </div>
        <div className="flex items-center gap-1">
          <button aria-label="自适应降级" className="flex size-5 items-center justify-center rounded-sm bg-[#5b87c7]">
            <Svg size="size-4"><path d="M12 2l9 5v10l-9 5-9-5V7zM3 7l9 5 9-5M12 12v10" stroke="#e4e4e4" strokeWidth="1.800" /></Svg>
          </button>
          <button className="whitespace-nowrap">添加时间</button>
        </div>
      </div>
    </footer>
  );
}

function TaskBar() {
  return (
    <div className="flex h-2 shrink-0 items-end bg-[#111]">
      <span className="ml-[251px] h-px w-4 bg-white" />
      <span className="ml-[61px] h-px w-[10px] bg-[#3b78d8]" />
      <span className="ml-[66px] h-px w-2 bg-[#2a6fc0]" />
      <span className="ml-[30px] h-px w-[6px] bg-[#a040a0]" />
      <span className="ml-[28px] h-px w-2 bg-[#4a7a70]" />
      <span className="ml-[15px] flex h-2 w-9 items-end justify-center bg-[#303030]"><span className="h-px w-4 bg-white" /></span>
    </div>
  );
}

function Brand() {
  return (
    <div className="absolute bottom-0 right-0 flex h-[271px] w-[542px] bg-white pl-[45px] pt-[74px] text-black">
      <svg viewBox="1423 861 150 120" className="h-[120px] w-[150px] shrink-0" aria-hidden="true">
        <defs>
          <linearGradient id="tower" x2="0" y2="1"><stop stopColor="#153a8e" /><stop offset=".5" stopColor="#1a479c" /><stop offset="1" stopColor="#6b9bd0" /></linearGradient>
        </defs>
        <path d="M1436 913C1450 884 1490 863 1527 864C1560 865 1578 889 1567 914C1568 890 1553 874 1523 874C1488 876 1452 893 1436 913Z" fill="#93c020" />
        <path d="M1433 919C1421 945 1434 980 1475 979C1522 975 1568 942 1570 909C1556 940 1522 963 1484 962C1450 962 1429 946 1433 919Z" fill="#123a8f" />
        <path d="M1497 880L1526 900V908L1508 917V950L1497 956ZM1532 907L1555 917 1532 944Z" fill="#d6d8da" />
        <path d="M1469 893L1497 880V956H1469Z" fill="url(#tower)" />
        <path d="M1437 932L1453 925V921L1460 918V953C1450 951 1440 944 1437 932ZM1510 916L1531 907V943L1510 952Z" fill="#17408f" />
        <path d="M1460 918L1467 923V955L1460 953Z" fill="#c4cede" />
      </svg>
      <div className="-ml-px flex flex-col pt-5">
        <span className="whitespace-nowrap text-[58px] font-black italic leading-[56px] font-['Noto_Sans_CJK_SC',sans-serif]">土木工程网</span>
        <span className="font-['Open_Sans',sans-serif] text-[40px] font-medium italic leading-[36px]">www.civilcn.com</span>
      </div>
    </div>
  );
}

export default function App() {
  return (
    <div className="relative flex h-screen flex-col overflow-hidden bg-[#444] font-['Liberation_Sans','Noto_Sans_CJK_SC',sans-serif]">
      <Gradients />
      <TitleBar />
      <MenuBar />
      <MainToolbar />
      <div className="flex min-h-0 flex-1">
        <IconRail />
        <div className="flex min-w-0 flex-1 flex-col">
          <Ribbon />
          <div className="flex min-h-0 flex-1">
            <div className="flex w-[39px] shrink-0 flex-col">
              <Dots className="mb-1 mt-2" />
              <div className="flex flex-1 flex-col items-center justify-end bg-[#2f2f2f]">
                <button aria-label="展开" className="mb-3 flex size-[19px] items-center justify-center rounded-sm bg-[#444]"><Svg size="size-2" box="0 0 8 8"><path d="M1 0l6 4-6 4z" fill="#eee" /></Svg></button>
                <button aria-label="视口布局" className="flex h-11 w-9 items-start justify-center rounded-t-sm bg-linear-to-b from-[#4a6a96] to-[#3f7fd8] pt-2"><span className="h-7 w-[30px] border border-[#26374f] bg-[#5d6b7e]" /></button>
              </div>
            </div>
            <SceneExplorer />
            <Viewport />
            <CommandPanel />
          </div>
          <TimeSlider />
          <TrackBar />
        </div>
      </div>
      <StatusBar />
      <TaskBar />
      <Brand />
    </div>
  );
}
